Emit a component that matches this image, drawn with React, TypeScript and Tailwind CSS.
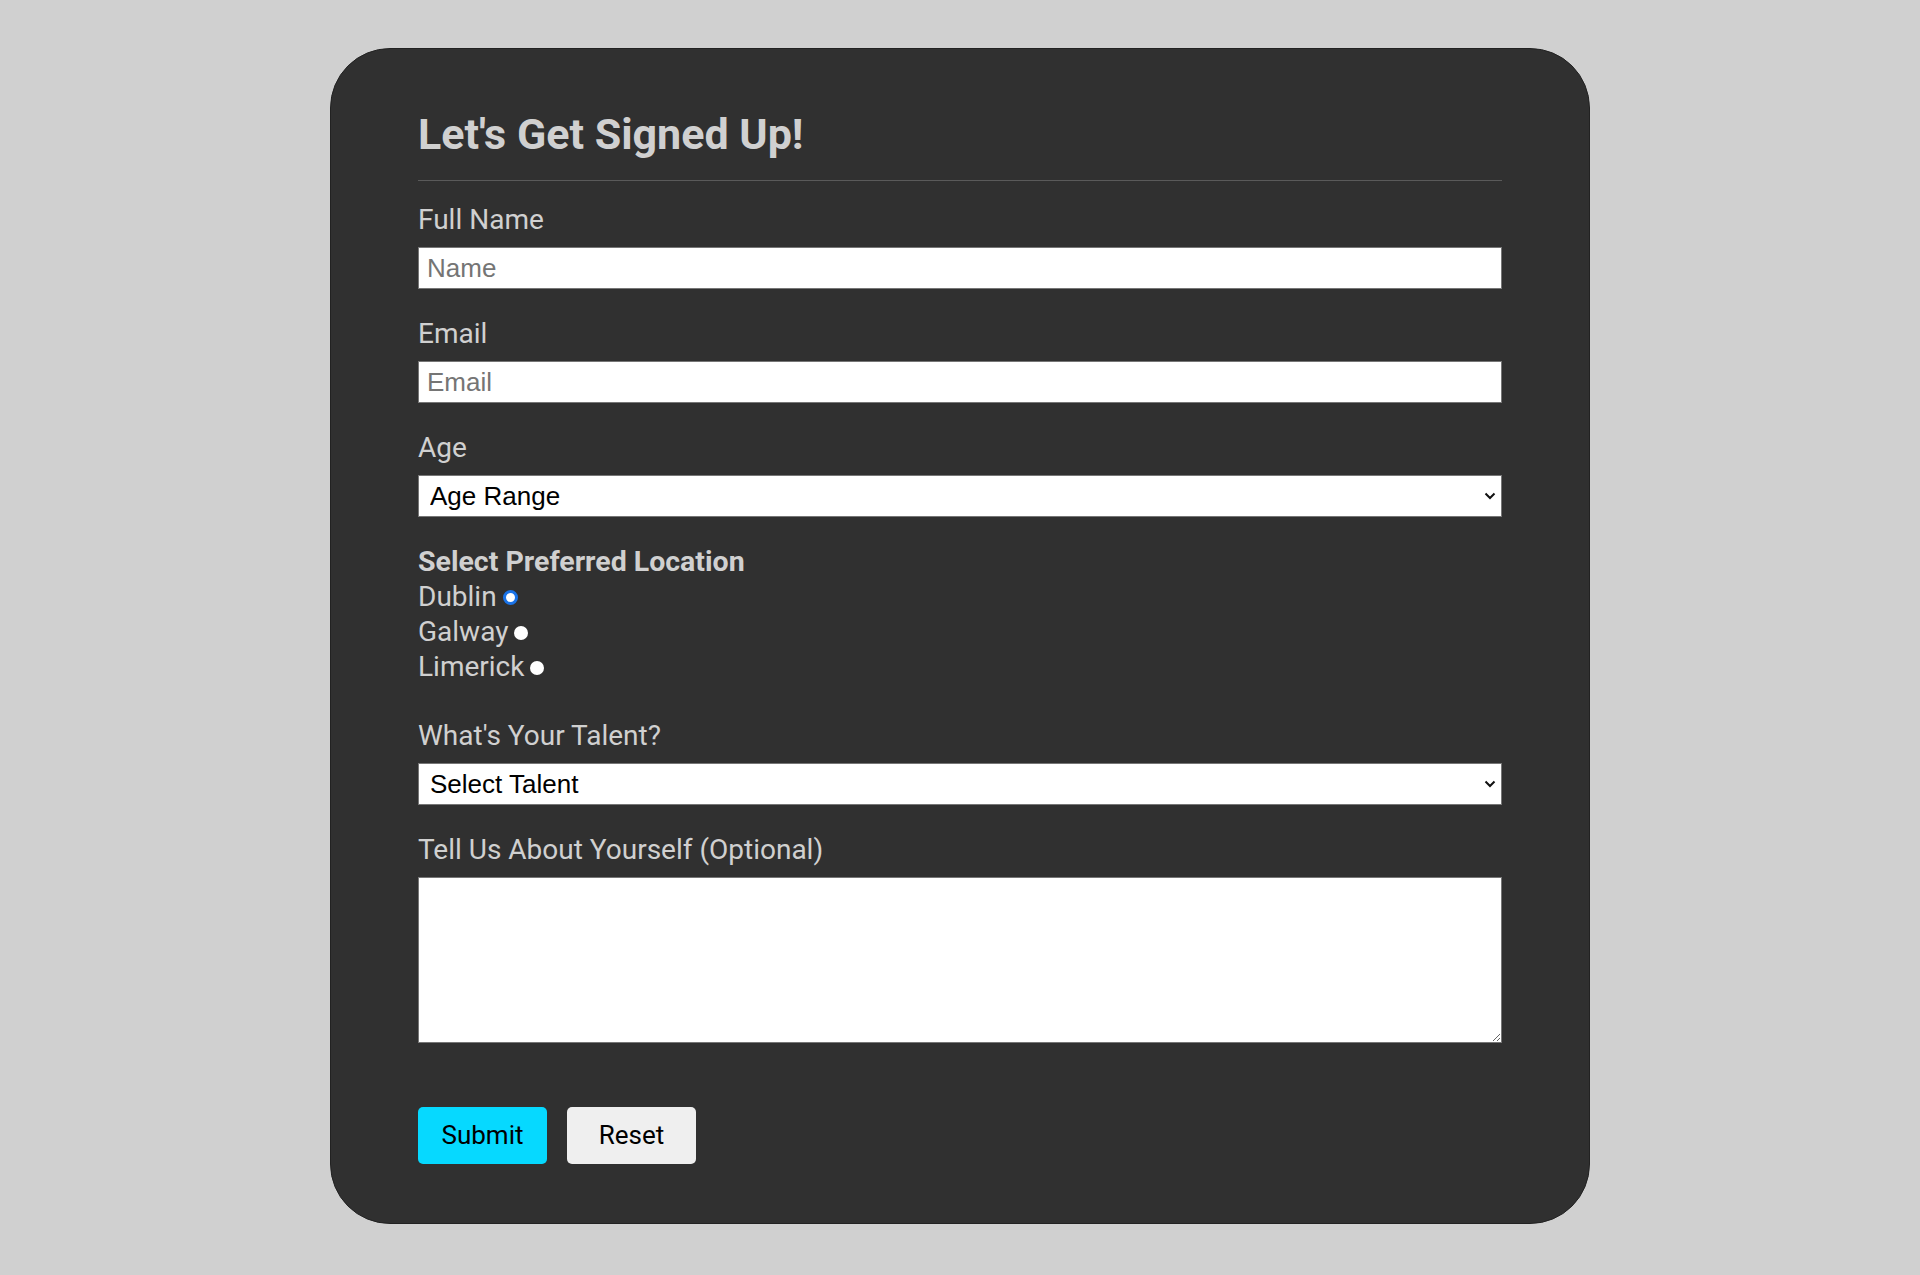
import { useState } from "react";

const labelCls = "block text-[28px] leading-[34px] text-[#d0d0d0] mb-[10px]";
const inputCls =
  "w-full h-[42px] bg-white border border-[#767676] px-[8px] text-[26px] text-black placeholder:text-[#757575] outline-none";

function Chevron() {
  return (
    <svg className="pointer-events-none absolute right-[6px] top-1/2 -translate-y-1/2" width="12" height="8" viewBox="0 0 12 8">
      <path d="M1.5 1.5 L6 6 L10.5 1.5" fill="none" stroke="#111" strokeWidth="2" />
    </svg>
  );
}

export default function App() {
  const [location, setLocation] = useState("dublin");
  const sans = { fontFamily: "Roboto, 'Liberation Sans', sans-serif" };
  const arial = { fontFamily: "'Liberation Sans', Arial, sans-serif" };

  return (
    <div className="min-h-screen bg-[#d0d0d0] pt-[48px] pb-[53px]" style={sans}>
      <form className="mx-auto w-[1260px] bg-[#303030] border border-[#222] rounded-[60px] px-[87px] pt-[59px] pb-[59px]" onSubmit={e => e.preventDefault()}>
        <h1 className="text-[43px] leading-[52px] font-bold text-[#d0d0d0]">Let's Get Signed Up!</h1>
        <hr className="mt-[20px] mb-[22px] border-0 border-t border-[#5a5a5a]" />

        <label className={labelCls}>Full Name</label>
        <input className={inputCls} style={arial} placeholder="Name" />

        <label className={`${labelCls} mt-[28px]`}>Email</label>
        <input className={inputCls} style={arial} type="email" placeholder="Email" />

        <label className={`${labelCls} mt-[28px]`}>Age</label>
        <div className="relative">
          <select className={`${inputCls} appearance-none pl-[11px]`} style={arial} defaultValue="">
            <option value="">Age Range</option>
            <option>18 - 25</option>
            <option>26 - 35</option>
            <option>36+</option>
          </select>
          <Chevron />
        </div>

        <div className="mt-[28px] text-[28.5px] leading-[34px] font-bold text-[#d0d0d0]">Select Preferred Location</div>
        {[
          ["dublin", "Dublin"],
          ["galway", "Galway"],
          ["limerick", "Limerick"],
        ].map(([v, t]) => (
          <label key={v} className="flex items-center h-[35px] text-[28px] text-[#d0d0d0]">
            {t}
            <input
              type="radio"
              name="location"
              value={v}
              checked={location === v}
              onChange={() => setLocation(v)}
              className="appearance-none ml-[6px] mt-[2px] size-[14px] rounded-full bg-white checked:size-[15px] checked:border-[3px] checked:border-[#1a73e8]"
            />
          </label>
        ))}

        <label className={`${labelCls} mt-[35px]`}>What's Your Talent?</label>
        <div className="relative">
          <select className={`${inputCls} appearance-none pl-[11px]`} style={arial} defaultValue="">
            <option value="">Select Talent</option>
            <option>Singing</option>
            <option>Dancing</option>
            <option>Comedy</option>
          </select>
          <Chevron />
        </div>

        <label className={`${labelCls} mt-[28px]`}>Tell Us About Yourself (Optional)</label>
        <textarea className="block w-full h-[166px] bg-white border border-[#767676] p-[8px] text-[22px] outline-none" style={arial} />

        <div className="flex gap-[20px] mt-[64px]">
          <button type="submit" className="w-[129px] h-[57px] rounded-[5px] bg-[#06d9ff] text-black text-[26px]">Submit</button>
          <button type="reset" className="w-[129px] h-[57px] rounded-[5px] bg-[#efefef] text-black text-[26px]">Reset</button>
        </div>
      </form>
    </div>
  );
}
